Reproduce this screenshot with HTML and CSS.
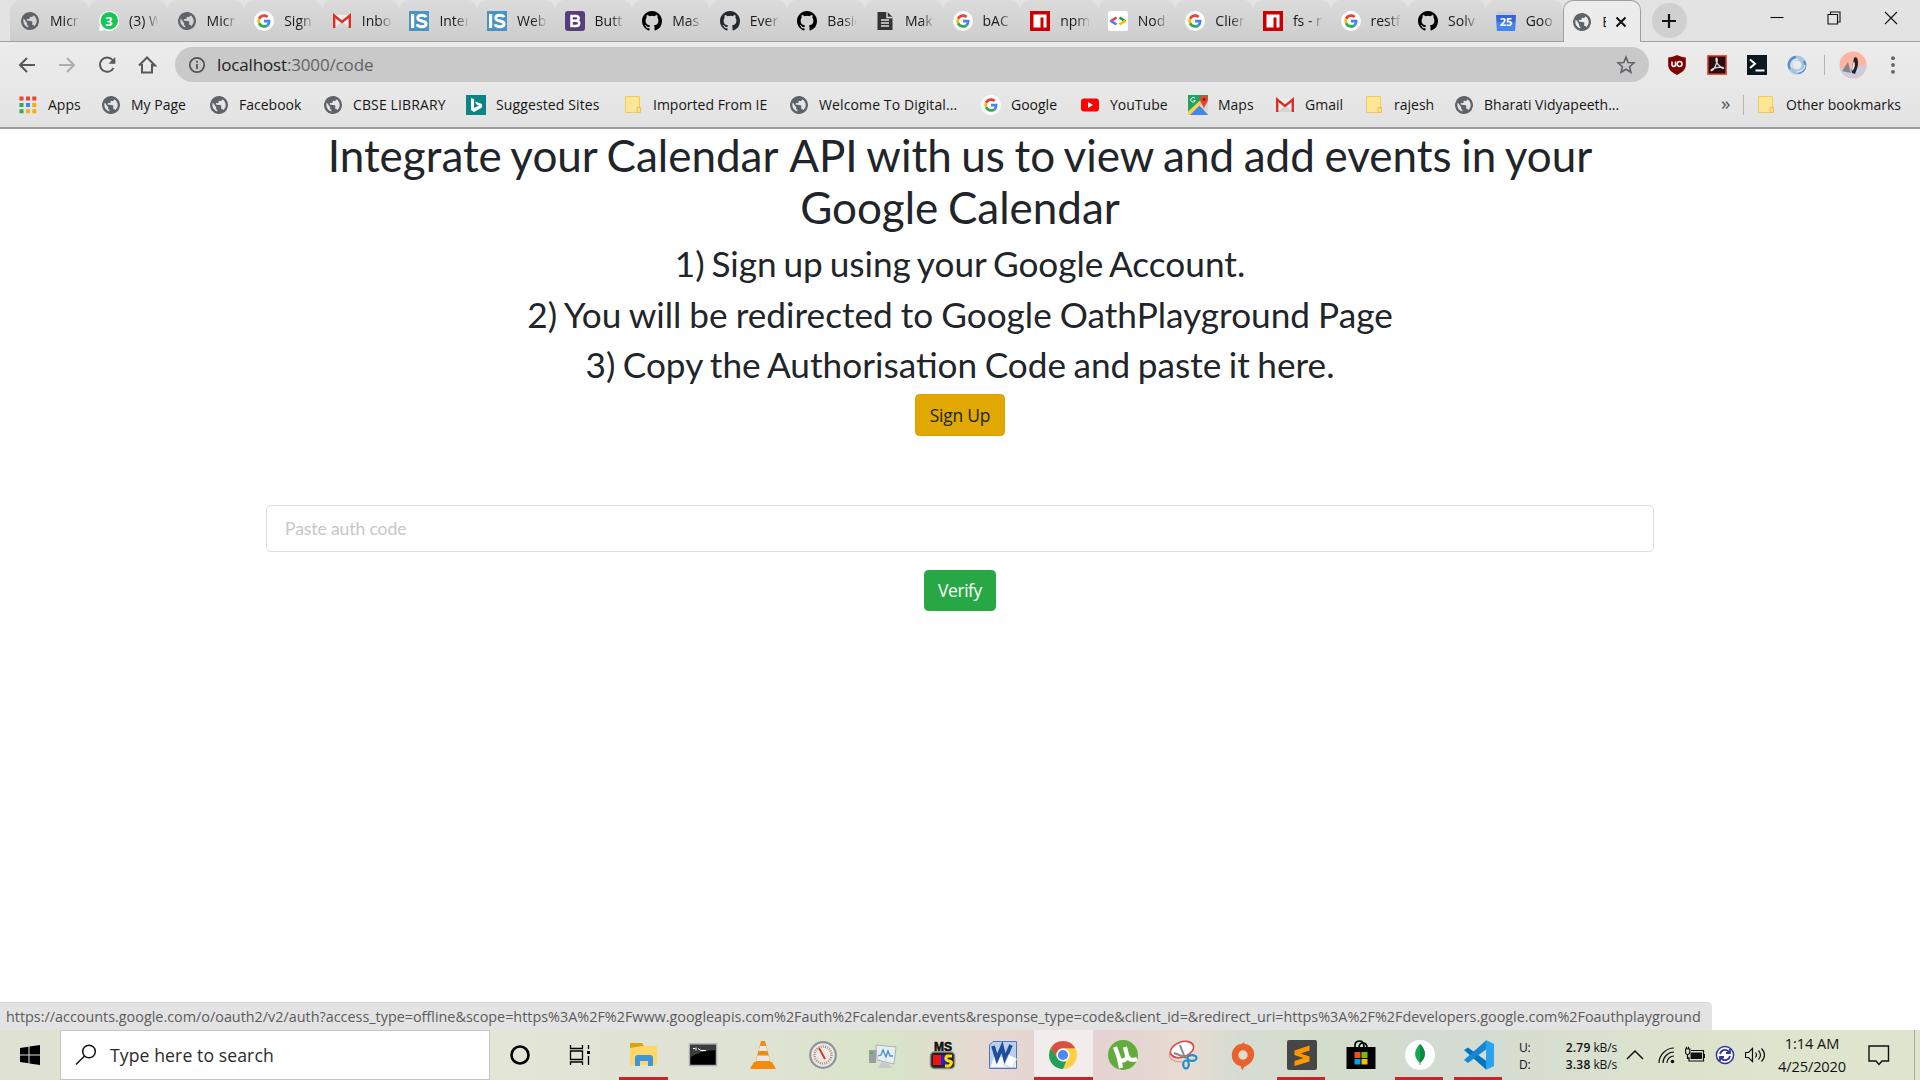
FILE: index.html
```html
<!DOCTYPE html>
<html lang="en">
<head>
<meta charset="utf-8">
<title>Calendar API</title>
<link rel="stylesheet" href="styles.css">
</head>
<body>
<svg class="defs" aria-hidden="true">
  <symbol id="globe" viewBox="0 0 24 24"><path fill="#5f6368" d="M12 1.2a10.8 10.8 0 1 0 0 21.6 10.8 10.8 0 0 0 0-21.6zm-1 18.73c-3.95-.49-7-3.85-7-7.93 0-.62.08-1.21.21-1.79L9 15v1c0 1.1.9 2 2 2v1.93zm6.9-2.54c-.26-.81-1-1.39-1.9-1.39h-1v-3c0-.55-.45-1-1-1H8v-2h2c.55 0 1-.45 1-1V7h2c1.1 0 2-.9 2-2v-.41c2.93 1.19 5 4.06 5 7.41 0 2.08-.8 3.97-2.1 5.39z" transform="rotate(8 12 12)"/></symbol>
  <symbol id="google" viewBox="0 0 20 20"><circle cx="10" cy="10" r="10" fill="#fff"/><g transform="translate(3.2 3.2) scale(.283)"><path fill="#EA4335" d="M24 9.5c3.54 0 6.71 1.22 9.21 3.6l6.85-6.85C35.9 2.38 30.47 0 24 0 14.62 0 6.51 5.38 2.56 13.22l7.98 6.19C12.43 13.72 17.74 9.5 24 9.5z"/><path fill="#4285F4" d="M46.98 24.55c0-1.57-.15-3.09-.38-4.55H24v9.02h12.94c-.58 2.96-2.26 5.48-4.78 7.18l7.73 6c4.51-4.18 7.09-10.36 7.09-17.65z"/><path fill="#FBBC05" d="M10.53 28.59a14.5 14.5 0 0 1 0-9.18l-7.98-6.19a24 24 0 0 0 0 21.56l7.98-6.19z"/><path fill="#34A853" d="M24 48c6.48 0 11.93-2.13 15.89-5.81l-7.73-6c-2.15 1.45-4.92 2.3-8.16 2.3-6.26 0-11.57-4.22-13.47-9.91l-7.98 6.19C6.51 42.62 14.62 48 24 48z"/></g></symbol>
  <symbol id="gmail" viewBox="0 0 20 20"><path fill="#eee" d="M2 4h16v13H2z"/><path fill="#d5d5d5" d="m2 17 8-7 8 7z"/><path fill="none" stroke="#d93025" stroke-width="2.4" d="M2.2 17V4.6L10 11l7.8-6.4V17"/></symbol>
  <symbol id="is" viewBox="0 0 20 20"><path fill="#4795c4" d="M0 0h20v20H0z"/><path fill="#fff" d="M2 3h3.2v14H2z"/><path fill="none" stroke="#fff" stroke-width="2.9" d="M17 6.2C16.500 4.800 15 4.200 12.900 4.200c-2.500 0-4.200 1-4.200 2.800 0 4.200 8.400 1.900 8.400 5.800 0 2-1.600 3-4.200 3-2.400 0-4.300-.7-4.700-2.600"/></symbol>
  <symbol id="github" viewBox="0 0 16 16"><path fill-rule="evenodd" d="M8 0C3.580 0 0 3.580 0 8c0 3.540 2.290 6.530 5.470 7.590.4.070.55-.17.55-.38 0-.19-.01-.82-.01-1.490-2.010.37-2.530-.49-2.690-.94-.09-.23-.48-.94-.82-1.130-.28-.15-.68-.52-.01-.53.63-.01 1.080.58 1.230.82.72 1.210 1.870.87 2.330.66.070-.52.28-.87.51-1.070-1.780-.2-3.640-.89-3.640-3.950 0-.87.31-1.590.82-2.150-.08-.2-.36-1.020.08-2.120 0 0 .67-.21 2.200.82a7.600 7.600 0 0 1 4 0c1.530-1.040 2.200-.82 2.200-.82.44 1.100.16 1.920.08 2.120.51.56.82 1.270.82 2.150 0 3.070-1.870 3.750-3.650 3.950.29.25.54.73.54 1.480 0 1.070-.01 1.930-.01 2.200 0 .21.15.46.55.38A8.010 8.010 0 0 0 16 8c0-4.420-3.580-8-8-8z"/></symbol>
  <symbol id="npm" viewBox="0 0 20 20"><path fill="#c00" d="M0 0h20v20H0z"/><path fill="#fff" d="M3.500 3.500h13v13h-3V6.500h-3v10h-7z"/></symbol>
  <symbol id="folder" viewBox="0 0 20 20"><path fill="#ffe596" stroke="#eccb5f" d="M2.500 1.500h14v16h-14z"/><path fill="#ffe07a" stroke="#eac24a" d="M14 12.500h3.500v5H14z"/></symbol>
</svg>

<header class="browser">
  <div class="tabstrip">
    <div class="tab first"><svg class="ico"><use href="#globe"/></svg><span>Micr</span></div>
    <div class="tab"><svg class="ico" viewBox="0 0 20 20"><path fill="#fff" d="M0 20 1 14A10 10 0 1 1 6 19z"/><circle cx="10.300" cy="9.700" r="8.700" fill="#14c656"/><text x="10" y="14.500" class="badge-num">3</text></svg><span>(3) W</span></div>
    <div class="tab"><svg class="ico"><use href="#globe"/></svg><span>Micr</span></div>
    <div class="tab"><svg class="ico"><use href="#google"/></svg><span>Sign</span></div>
    <div class="tab"><svg class="ico"><use href="#gmail"/></svg><span>Inbo</span></div>
    <div class="tab"><svg class="ico"><use href="#is"/></svg><span>Inter</span></div>
    <div class="tab"><svg class="ico"><use href="#is"/></svg><span>Web</span></div>
    <div class="tab"><svg class="ico" viewBox="0 0 20 20"><rect width="20" height="20" rx="3" fill="#563d7c"/><path fill="none" stroke="#fff" stroke-width="2.500" d="M6.500 5h4.500c3.500 0 3.500 4.700 0 4.700H6.500 11c4.300 0 4.300 5.300 0 5.300H6.500V5z"/></svg><span>Butt</span></div>
    <div class="tab"><svg class="ico"><use href="#github"/></svg><span>Mas</span></div>
    <div class="tab"><svg class="ico slate"><use href="#github"/></svg><span>Ever</span></div>
    <div class="tab"><svg class="ico"><use href="#github"/></svg><span>Basic</span></div>
    <div class="tab"><svg class="ico" viewBox="0 0 20 20"><path fill="#333" d="M2.500 1h10L17.500 6v13h-15z"/><path fill="none" stroke="#e0e0e0" stroke-width="1.400" d="M12 1v5.500h5.500M6 9h8M6 12h8M6 15h8"/></svg><span>Mak</span></div>
    <div class="tab"><svg class="ico"><use href="#google"/></svg><span>bAC</span></div>
    <div class="tab"><svg class="ico"><use href="#npm"/></svg><span>npm</span></div>
    <div class="tab"><svg class="ico" viewBox="0 0 20 20"><rect width="20" height="20" rx="2.500" fill="#fff"/><g fill="none" stroke-width="2.600"><path stroke="#ea4335" d="m8.500 6.500-6 3.800"/><path stroke="#4285f4" d="m2.500 9.700 6 3.800"/><path stroke="#0f9d58" d="m11.500 6.500 6 3.800"/><path stroke="#fbbc05" d="m17.500 9.700-6 3.800"/></g></svg><span>Nod</span></div>
    <div class="tab"><svg class="ico"><use href="#google"/></svg><span>Clien</span></div>
    <div class="tab"><svg class="ico"><use href="#npm"/></svg><span>fs - n</span></div>
    <div class="tab"><svg class="ico"><use href="#google"/></svg><span>restf</span></div>
    <div class="tab"><svg class="ico"><use href="#github"/></svg><span>Solv</span></div>
    <div class="tab last"><svg class="ico" viewBox="0 0 20 20"><path fill="#c9ccd2" d="M1 1h18v5H1z"/><path fill="#3367d6" d="M0 4h20l-1 16H1z"/><path fill="#4285f4" d="M.8 11h18.400l-.6 9H1.400z"/><text x="10" y="15" class="cal-num">25</text></svg><span>Goo</span></div>
    <div class="tab active"><svg class="ico"><use href="#globe"/></svg><span>E</span><svg class="x" viewBox="0 0 12 12"><path d="m1.500 1.500 9 9m0-9-9 9"/></svg></div>
    <div class="newtab"><svg viewBox="0 0 16 16"><path d="M8 1v14M1 8h14"/></svg></div>
    <div class="winbtns">
      <svg viewBox="0 0 14 14"><path d="M.5 6.500h13"/></svg>
      <svg viewBox="0 0 14 14"><path d="M1 3.500h9.500V13H1zM3.500 3.500V1h9.500v10h-2.500"/></svg>
      <svg viewBox="0 0 14 14"><path d="m1 1 12 12m0-12L1 13"/></svg>
    </div>
  </div>

  <div class="toolbar">
    <div class="nav">
      <svg viewBox="0 0 20 20"><path d="M18 10H3m7-7-7 7 7 7"/></svg>
      <svg class="off" viewBox="0 0 20 20"><path d="M2 10h15m-7-7 7 7-7 7"/></svg>
      <svg viewBox="0 0 20 20"><path d="M16.500 13a7.200 7.200 0 1 1-1-8.200l1 1.200"/><path class="fill" d="M18.300 2v6.800h-6.800z"/></svg>
      <svg viewBox="0 0 20 20"><path d="M5 9v8.500h10V9M2 10.500l8-8 8 8h-3"/></svg>
    </div>
    <div class="omnibox">
      <svg class="info" viewBox="0 0 18 18"><circle cx="9" cy="9" r="7.200"/><path d="M9 8v5M9 4.800v1.900"/></svg>
      <p class="url">localhost<span>:3000/code</span></p>
      <svg class="star" viewBox="0 0 20 20"><path d="m10 2.200 2.200 5.300 5.700.5-4.300 3.700 1.300 5.600-4.900-3-4.900 3 1.300-5.600L2.100 8l5.700-.5z"/></svg>
    </div>
    <div class="extensions">
      <svg viewBox="0 0 20 20"><path fill="#800000" d="M10 0c3 1.800 6 2.300 8.800 2.500v7.500c0 5-4 7.500-8.800 10-4.800-2.500-8.800-5-8.800-10V2.500C4 2.300 7 1.800 10 0z"/><path fill="none" stroke="#fff" stroke-width="1.500" d="M5 6.500v3c0 2.500 3.500 2.500 3.500 0v-3m0 0v5"/><circle cx="12.600" cy="9" r="2.400" fill="none" stroke="#fff" stroke-width="1.500"/></svg>
      <svg viewBox="0 0 20 20"><path fill="#2b0f10" stroke="#f0503c" stroke-width="1.500" d="M.8.8h18.400v18.400H.8z"/><path fill="none" stroke="#ddd" stroke-width="1.300" d="M4 15.500C3.500 13 16 11 16.500 13S9 9 9 5s2-1 1 2-3 9-6 8.500z"/></svg>
      <svg viewBox="0 0 20 20"><path fill="#0b1720" d="M0 0h20v20H0z"/><path fill="none" stroke="#fff" stroke-width="2" d="m3 4.500 5 4.300-5 4.300M8.500 15.500h9"/></svg>
      <svg viewBox="0 0 20 20"><circle cx="10" cy="10" r="7" fill="none" stroke="#a9c4e2" stroke-width="5"/><path fill="none" stroke="#5f8fc2" stroke-width="2.400" d="M3 14a8 8 0 0 1 6-12M17 6a8 8 0 0 1-6 12"/><path fill="none" stroke="#dbe8f5" stroke-width="1.500" d="M5.500 13a5.500 5.500 0 0 1 6-8.500M18 10a8 8 0 0 1-8 7"/></svg>
      <i class="vsep"></i>
      <svg class="avatar" viewBox="0 0 28 28"><circle cx="14" cy="14" r="13.500" fill="#ffb3a1"/><path fill="#c9cde0" d="M.7 17c9-2 17 1 26.500-4a13.500 13.500 0 0 1-26.500 4z"/><path fill="#8f8585" d="m3 20 6-9 3 11z"/><path fill="#222" d="M15 7c1-1.500 3-1 3.500 1 1 4 .5 8-1 11l-1.500 4-3-1c-1-4 1-10 2-15z"/><path fill="#eee" d="M15 10c1.500 3 1 7-1.500 10-1-3 0-7 1.500-10z"/></svg>
      <svg class="dots" viewBox="0 0 4 18"><circle cx="2" cy="2.200" r="1.900"/><circle cx="2" cy="9" r="1.900"/><circle cx="2" cy="15.800" r="1.900"/></svg>
    </div>
  </div>

  <div class="bookmarks">
    <div class="bm"><svg class="ico" viewBox="0 0 20 20"><path fill="#ea4335" d="M1.500 1.500h4v4h-4zM8 1.500h4v4H8zM14.300 1.500h4v4h-4z"/><path fill="#34a853" d="M1.500 8h4v4h-4zM1.500 14.300h4v4h-4z"/><path fill="#4285f4" d="M8 8h4v4H8z"/><path fill="#fbab05" d="M14.300 8h4v4h-4zM8 14.300h4v4H8zM14.300 14.300h4v4h-4z"/></svg><span>Apps</span></div>
    <div class="bm"><svg class="ico"><use href="#globe"/></svg><span>My Page</span></div>
    <div class="bm"><svg class="ico"><use href="#globe"/></svg><span>Facebook</span></div>
    <div class="bm wide"><svg class="ico"><use href="#globe"/></svg><span>CBSE LIBRARY</span></div>
    <div class="bm wide"><svg class="ico" viewBox="0 0 20 20"><path fill="#0c8484" d="M0 0h20v20H0z"/><path fill="#fff" d="m5 3 3 1v9l5-2.500-2.500-1L9 6.500l7 2.500v3.500L8 17l-3-2z"/></svg><span>Suggested Sites</span></div>
    <div class="bm"><svg class="ico"><use href="#folder"/></svg><span>Imported From IE</span></div>
    <div class="bm wide"><svg class="ico"><use href="#globe"/></svg><span>Welcome To Digital...</span></div>
    <div class="bm"><svg class="ico"><use href="#google"/></svg><span>Google</span></div>
    <div class="bm"><svg class="ico" viewBox="0 0 20 20"><rect x="1" y="3.500" width="18" height="13" rx="3" fill="red"/><path fill="#fff" d="m8 7 5 3-5 3z"/></svg><span>YouTube</span></div>
    <div class="bm"><svg class="ico" viewBox="0 0 20 20"><path fill="#1fa463" d="M0 0h20v20H0z"/><path fill="#d8d8d8" d="m11 10 9-6v16z"/><path fill="#4285f4" d="m2 20 9-9 8 9z"/><path fill="#ffd04b" d="M0 16.500 12.500 5l1.500 3L2 20H0z"/><path fill="#ea4335" d="M16 14c-1-5-4-6-4-9.500a4 4 0 0 1 8 0C20 8 17 9 16 14z"/><circle cx="16" cy="4.500" r="1.600" fill="#7c1f16"/><path fill="none" stroke="#fff" d="M7 3.500a2.300 2.300 0 1 0 .3 2H5.500"/></svg><span>Maps</span></div>
    <div class="bm"><svg class="ico"><use href="#gmail"/></svg><span>Gmail</span></div>
    <div class="bm"><svg class="ico"><use href="#folder"/></svg><span>rajesh</span></div>
    <div class="bm"><svg class="ico"><use href="#globe"/></svg><span>Bharati Vidyapeeth...</span></div>
    <div class="more">»</div>
    <i class="vsep"></i>
    <div class="bm other"><svg class="ico"><use href="#folder"/></svg><span>Other bookmarks</span></div>
  </div>
</header>

<main class="page">
  <h1>Integrate your Calendar <span class="api">API</span> with us to view and add events in your Google Calendar</h1>
  <h2 class="lead">1) Sign up using your Google Account.</h2>
  <h2 class="loose">2) You will be redirected to Google OathPlayground Page</h2>
  <h2>3) Copy the Authorisation Code and paste it here.</h2>
  <button class="btn signup">Sign Up</button>
  <input class="code" type="text" placeholder="Paste auth code">
  <button class="btn verify">Verify</button>
  <div class="status">https://accounts.google.com/o/oauth2/v2/auth?access_type=offline&amp;scope=https%3A%2F%2Fwww.googleapis.com%2Fauth%2Fcalendar.events&amp;response_type=code&amp;client_id=&amp;redirect_uri=https%3A%2F%2Fdevelopers.google.com%2Foauthplayground</div>
</main>

<footer class="taskbar">
  <div class="start"><svg viewBox="0 0 20 20"><path d="M0 3 8.500 1.800v7.700H0zM9.500 1.600 20 0v9.500H9.500zM0 10.500h8.500v7.700L0 17zM9.500 10.500H20V20L9.500 18.400z"/></svg></div>
  <div class="search"><svg viewBox="0 0 22 22"><circle cx="14" cy="7.500" r="6.300"/><path d="M9.500 12 1 20.500"/></svg><span>Type here to search</span></div>
  <div class="apps">
    <div class="app"><svg viewBox="0 0 30 30"><circle cx="15" cy="15" r="8.500" fill="none" stroke="#000" stroke-width="2.600"/></svg></div>
    <div class="app view"><svg viewBox="0 0 30 30"><path fill="none" stroke="#000" stroke-width="1.300" d="M5.500 5v3.500h12V5M5.500 11h12v8.500h-12zM5.500 25v-3h12v3M23.500 5v4M23.500 16v9"/><path d="M22 11h3v3h-3z"/></svg></div>
    <div class="app run"><svg viewBox="0 0 30 30"><path fill="#e0a00c" d="M2 3h12l2 3v4H2z"/><path fill="#ffd766" d="M2 8l12-2h15v19H2z"/><path fill="#3b97dc" d="M7 26V18q0-3 3-3h12q3 0 3 3v8h-5v-5h-8v5z"/></svg></div>
    <div class="app"><svg viewBox="0 0 30 30"><path fill="#000" stroke="#a8afb5" stroke-width="1.500" d="M1.500 4h27v21.500h-27z"/><path fill="#555" d="M2.500 5h25v5q-15 1-25 7z" opacity=".7"/><path fill="none" stroke="#fff" d="M5 8.500h2m1-1v3m2-2 3 2h5"/></svg></div>
    <div class="app"><svg viewBox="0 0 30 30"><path fill="#f48b0c" d="M6 22h18l4 7H2z"/><path fill="#f48b0c" d="M13 1h4l6 23H7z"/><path fill="#e9e9e9" d="m12 6-1.300 5h8.600L18 6zM9.500 15.500 8 21h14l-1.500-5.500z"/></svg></div>
    <div class="app"><svg viewBox="0 0 30 30"><circle cx="15" cy="15" r="12.800" fill="#ece8e4" stroke="#8d969b" stroke-width="2.200"/><circle cx="15" cy="15" r="8.500" fill="none" stroke="#a98a7c" stroke-dasharray="1 1.200" stroke-width="2.400"/><path stroke="#d33425" stroke-width="1.800" d="m11 8 6 11"/></svg></div>
    <div class="app"><svg viewBox="0 0 30 30"><path fill="#9a9f9f" d="M1 10h7v13H1z"/><path fill="#4fb34f" d="M2 12h3v2H2z"/><path fill="#e9eef2" stroke="#abb3b8" d="m8 5 20 2-2 17-17-4z"/><path fill="none" stroke="#3d92c8" stroke-width="1.300" d="m10 16 3-1 2-5 3 7 2-6 2 5h3"/><path fill="#c4c9cb" d="m14 22 7 2 3 4H10z"/></svg></div>
    <div class="app"><svg viewBox="0 0 30 30"><text x="15" y="10.500" class="ms">MS</text><rect x="2.500" y="12" width="24" height="16.500" rx="4" fill="#222" stroke="#888" stroke-width="1.500"/><path fill="#e11" d="M5 15h8v10H5z"/><path fill="#22c" d="M13 15h7v10h-7z"/><path fill="none" stroke="#fd0" stroke-width="3" d="M24 16h-5q-3 4 2 5t0 5h-4"/></svg></div>
    <div class="app"><svg viewBox="0 0 30 30"><path fill="#bcd0ee" stroke="#5577ad" d="M5 1.500h23.500v27h-27V5z"/><path fill="#f4f7fc" d="M6 17h22v10H2.500z"/><path fill="none" stroke="#1d4f9e" stroke-width="3.800" d="m5 6 4 13 5-12 3 12 6-14"/><path fill="#fff" stroke="#9bb0cf" stroke-width=".6" d="m21 14 8 5-5 9-8-3z"/></svg></div>
    <div class="app run current"><svg viewBox="0 0 30 30"><circle cx="15" cy="15" r="14" fill="#fdd046"/><path fill="#1fa15d" d="M15 29A14 14 0 0 1 2.900 8L9.400 18.200 15 21.500l3 0z"/><path fill="#d94f43" d="M2.900 8A14 14 0 0 1 27.200 8.200H15a6.600 6.600 0 0 0-5.700 10z"/><circle cx="15" cy="15" r="6.500" fill="#fff"/><circle cx="15" cy="15" r="5.100" fill="#4a8af4"/></svg></div>
    <div class="app"><svg viewBox="0 0 30 30"><circle cx="15" cy="15" r="15" fill="#62ac3c"/><path fill="none" stroke="#fff" stroke-width="4.200" d="m7 7 4 11c2 5 9 2 8-3L17 7m2 8c2 5 5 6 10 4M11 18l2 10"/></svg></div>
    <div class="app"><svg viewBox="0 0 30 30"><ellipse cx="14" cy="9.500" rx="12" ry="7.500" transform="rotate(-20 14 9.500)" fill="#fff" stroke="#e04545" stroke-width="1.600"/><path fill="none" stroke="#e58b8b" d="M2 11q-4 11 12 11"/><path stroke="#888" stroke-width="2" d="m12 5 5 13M6 13l13 5"/><g fill="none" stroke="#278acb" stroke-width="2.200"><ellipse cx="24" cy="18" rx="4.500" ry="2.800"/><ellipse cx="18" cy="24.500" rx="2.800" ry="4"/></g></svg></div>
    <div class="app"><svg viewBox="0 0 30 30"><path fill="#e9622c" d="M17 0q-2 3 0 4c7 1 10 7 9 12-1 6-5 8-8 10q-3 1-3 4-3-2-2-4C6 25 3 19 4 13c1-5 5-9 9-9q3-1 4-4z"/><circle cx="15" cy="15" r="4.700" fill="#dcdccf"/></svg></div>
    <div class="app run slim"><svg viewBox="0 0 30 30"><rect width="30" height="30" rx="2" fill="#464646"/><path fill="#ff9800" d="m7.500 10.500 15-5v5l-9 3 9 3v5l-15 4.500v-5l9-3-9-3z"/></svg></div>
    <div class="app"><svg viewBox="0 0 30 30"><path fill="none" stroke="#000" stroke-width="1.700" d="M9 8V5q0-4 5-4 4 0 4 7M13 8q0-5 4-5t4 5"/><path d="M.5 7h29v22H.5z"/><path fill="#f25022" d="M8.500 12h6v6h-6z"/><path fill="#7fba00" d="M15.500 12h6v6h-6z"/><path fill="#00a4ef" d="M8.500 19h6v5.500h-6z"/><path fill="#ffb900" d="M15.500 19h6v5.500h-6z"/></svg></div>
    <div class="app run slim"><svg viewBox="0 0 30 30"><circle cx="15" cy="15" r="15" fill="#fff"/><path fill="#13aa52" d="M15 4c7 7 6 14 0 19-6-5-7-12 0-19z"/><path fill="#0b8a43" d="M15 4c7 7 6 14 0 19z"/><path stroke="#6b8f71" d="M15 21v4"/></svg></div>
    <div class="app run slim"><svg viewBox="0 0 30 30"><path fill="#0076c0" d="M0 10 4 7.500l19 14-1 8z"/><path fill="#1687d3" d="M0 20 4 23 24 8 22 .5z"/><path fill="#2aa3f0" d="m22 0 8 4v22l-8 4z"/></svg></div>
  </div>
  <div class="net"><span>U:</span><span><b>2.79</b> kB/s</span><span>D:</span><span><b>3.38</b> kB/s</span></div>
  <div class="tray">
    <svg viewBox="0 0 20 20"><path d="m2 14 8-8 8 8"/></svg>
    <svg viewBox="0 0 20 20"><path class="thin" d="M3 18C3 10 10 3 18 3M7 18c0-6 5-11 11-11M11 18c0-4 3-7 7-7"/><circle cx="16.500" cy="16.500" r="1.800"/></svg>
    <svg viewBox="0 0 20 20"><path class="solid" d="M5.500 7.500h11.500v6.500H5.500z"/><path class="thin" d="M6 5.500h12.500v10.500H4V12M19.500 9v4M.5 4v3q0 2.500 2 2.500T4.800 7V4zM1.500 1.800V4m2-2.200V4M2.500 10v3.500H4"/></svg>
    <svg viewBox="0 0 20 20"><circle cx="10" cy="10" r="8.600" class="sync"/><path class="arrows" d="M5 9a5 5 0 0 1 8.500-2.500L15 8m0-4v4h-4M15 11a5 5 0 0 1-8.500 2.500L5 12m0 4v-4h4"/></svg>
    <svg viewBox="0 0 20 20"><path class="thin" d="M.5 7.500h3l4-4v13l-4-4h-3zM10.500 7.500q2 2.500 0 5M13.500 5.500q4 4.500 0 9M16.500 3.500q6 6.500 0 13"/></svg>
  </div>
  <div class="clock"><span>1:14 AM</span><span>4/25/2020</span></div>
  <div class="notif"><svg viewBox="0 0 22 22"><path d="M1 2h19.500v15H14l-3 3.500L8 17H1z"/></svg></div>
</footer>
</body>
</html>
```

FILE: styles.css
```css
* { box-sizing: border-box; }

body {
  margin: 0;
  width: 1920px;
  height: 1080px;
  display: flex;
  flex-direction: column;
  overflow: hidden;
  background: #fff;
  font-family: "Open Sans", "Noto Sans", sans-serif;
  font-size: 14px;
  color: #111;
}

svg { flex: none; display: block; }
.defs { position: absolute; width: 0; height: 0; }
.ico { width: 20px; height: 20px; }
.slate { fill: #24292e; }
.vsep { width: 1px; height: 20px; background: #b4b4b4; }

/* Browser frame */
.browser {
  height: 129px;
  flex: none;
  border-bottom: 2px solid #9c9c9c;
  background: linear-gradient(#e3e3e3 0, #e3e3e3 41px, #ececec 42px, #e3e3e3 127px);
}

.tabstrip {
  height: 42px;
  padding-left: 10px;
  display: flex;
  border-bottom: 1px solid #a0a0a0;
}

.tab {
  position: relative;
  width: 77.6px;
  height: 41px;
  flex: none;
  display: flex;
  align-items: center;
  gap: 10px;
  padding-left: 10px;
  border-radius: 10px 10px 0 0;
  background: linear-gradient(#dbdbdb, #cdcdcd);
  color: #1a1a1a;
}
.tab.first { width: 79px; }
.tab:not(.last):not(.active)::after {
  content: "";
  position: absolute;
  right: -1px;
  top: 9px;
  width: 1px;
  height: 25px;
  background: #7d7d7d;
}
.tab span {
  width: 29px;
  overflow: hidden;
  white-space: nowrap;
  mask-image: linear-gradient(90deg, #000 55%, rgba(0, 0, 0, .1));
}
.tab.active {
  height: 42px;
  width: 77.500px;
  padding-left: 8px;
  border: 1px solid #a0a0a0;
  border-bottom: 0;
  background: #ececec;
  z-index: 1;
}
.tab.active span { width: 4px; margin-right: -1px; mask-image: none; }
.x { width: 12px; height: 12px; stroke: #111; stroke-width: 2; }
.badge-num { font: bold 13px "Open Sans", sans-serif; fill: #fff; text-anchor: middle; }
.cal-num { font: bold 11px "Open Sans", sans-serif; fill: #fff; text-anchor: middle; }

.newtab {
  width: 35px;
  height: 35px;
  margin: 3px 0 0 11px;
  border-radius: 50%;
  background: #d0d0d0;
  display: grid;
  place-items: center;
}
.newtab svg { width: 16px; height: 16px; stroke: #111; stroke-width: 2.200; }

.winbtns {
  margin-left: auto;
  padding: 11px 22px 0 0;
  display: flex;
  gap: 43px;
}
.winbtns svg { width: 14px; height: 14px; fill: none; stroke: #111; stroke-width: 1.100; }

.toolbar {
  height: 45px;
  padding: 0 0 0 17px;
  display: flex;
  align-items: center;
}
.nav { display: flex; gap: 20px; width: 158px; }
.nav svg { width: 20px; height: 20px; fill: none; stroke: #55585c; stroke-width: 2; }
.nav .off { stroke: #adadad; }
.nav .fill { fill: #55585c; stroke: none; }

.omnibox {
  width: 1474px;
  height: 35px;
  border-radius: 18px;
  padding: 0 13px;
  background: #c9c9c9;
  display: flex;
  align-items: center;
}
.info { width: 18px; height: 18px; fill: none; stroke: #4f5256; stroke-width: 1.700; }
.url { margin: 0 auto 0 11px; font-size: 17px; color: #222; letter-spacing: -.15px; }
.url span { color: #606366; }
.star { width: 20px; height: 20px; fill: none; stroke: #5f6368; stroke-width: 1.600; }

.extensions { flex: 1; display: flex; align-items: center; padding-left: 18px; gap: 20px; }
.extensions svg { width: 20px; height: 20px; }
.extensions .vsep { margin-left: -3px; }
.extensions .avatar { width: 28px; height: 28px; margin-left: -6px; }
.extensions .dots { width: 4px; height: 18px; fill: #5f6368; margin-left: 4px; }

.bookmarks {
  height: 36px;
  padding-left: 18px;
  display: grid;
  grid-template-columns: 83px 108px 114px 143px 157px 166px 192px 99px 108px 87px 89px 90px 267px 22px 13px 1fr;
  align-items: center;
}
.bm { display: flex; align-items: center; gap: 10px; white-space: nowrap; color: #161616; }
.bm span { padding-bottom: 2px; }
.bm.wide { letter-spacing: .12px; }
.more { font-size: 19px; color: #555; line-height: 20px; padding-bottom: 4px; }

/* Page */
.page {
  position: relative;
  flex: 1;
  display: flex;
  flex-direction: column;
  align-items: center;
  font-family: Lato, sans-serif;
  color: #212529;
  text-align: center;
}
h1, h2 { margin: 0; font-weight: 400; word-spacing: -1.550px; }
h1 { width: 1355px; font-size: 44px; line-height: 52px; margin-bottom: 9px; word-spacing: -1.700px; }
h1 .api { margin-left: 2px; }
h2 { font-size: 35.200px; line-height: 42px; margin-bottom: 8.600px; }
h2.lead { word-spacing: -2.200px; }
h2.loose { word-spacing: -1px; }

.btn {
  height: 42px;
  padding: 0;
  border: 1px solid;
  border-radius: 4.400px;
  font-family: "Open Sans", sans-serif;
  font-size: 17.400px;
  letter-spacing: -.200px;
}
.signup { width: 90px; background: #e0a800; border-color: #d39e00; color: #212529; }
.verify { width: 72px; height: 41px; background: #28a745; border-color: #28a745; color: #fff; letter-spacing: -.4px; }

.code {
  width: 1388px;
  height: 47px;
  margin: 69px 0 18px;
  padding: 0 18px;
  border: 1px solid #dededf;
  border-radius: 5px;
  font: 17.600px Lato, sans-serif;
  letter-spacing: -.130px;
}
.code::placeholder { color: #c7c7c7; }

.status {
  position: absolute;
  left: 0;
  bottom: 0;
  width: 1712px;
  height: 28px;
  padding-left: 6px;
  border: solid #d5d5d5;
  border-width: 1px 0 0;
  border-radius: 0 5px 0 0;
  background: #e3e3e3;
  color: #5b5b5b;
  font: 14.380px/27px "Open Sans", sans-serif;
  text-align: left;
  white-space: nowrap;
}

/* Taskbar */
.taskbar {
  height: 50px;
  flex: none;
  display: flex;
  background: linear-gradient(90deg, #dfe1d2 0, #e3e5d6 500px, #dfe3d4 760px, #d7e4c6 890px, #e6d8d2 980px, #e5d3d3 1110px, #e6dcd0 1190px, #d6dcd3 1240px, #d4ddcb 1320px, #d3dbd3 1450px, #dbe2cd 1640px, #e0e5cd 1860px, #dce5cf 1920px);
}
.taskbar > div { flex: none; }
.start { width: 60px; display: grid; place-items: center; }
.start svg { width: 20px; height: 20px; }
.search {
  width: 430px;
  padding-left: 14px;
  border: 1px solid #c6c6c6;
  background: #fff;
  display: flex;
  align-items: center;
  gap: 13px;
  font-size: 17.600px;
  letter-spacing: .1px;
  color: #2b2b2b;
}
.search svg { width: 22px; height: 22px; fill: none; stroke: #111; stroke-width: 1.500; }
.search span { padding-bottom: 1px; }

.apps {
  width: 1018px;
  display: grid;
  grid-template-columns: 60px 63px repeat(10, 60px) repeat(5, 59px);
}
.app { position: relative; display: grid; place-items: center; }
.app svg { width: 30px; height: 30px; }
.app.view { padding-right: 4px; }
.app.run::after {
  content: "";
  position: absolute;
  left: 6px;
  bottom: 0;
  width: 49px;
  height: 3px;
  background: #cc2229;
}
.app.slim::after { left: 5px; width: 48px; }
.app.current { background: linear-gradient(#f3ecec, #f3ecec) 1px 0 / 59px 100% no-repeat; }
.app.current::after { left: 1px; width: 59px; }
.ms { font: 900 12px "Liberation Sans", sans-serif; text-anchor: middle; fill: #111; stroke: #111; stroke-width: .6; }

.net {
  width: 110px;
  margin-left: 11px;
  padding: 9px 12px 8px 0;
  display: grid;
  grid-template-columns: 1fr auto;
  line-height: 17px;
  font-size: 12px;
  letter-spacing: -.15px;
}
.net b { font-weight: 600; letter-spacing: .2px; }

.tray { display: flex; align-items: center; gap: 10px; margin-left: -4px; width: 149px; }
.tray svg { width: 20px; height: 20px; fill: none; stroke: #111; stroke-width: 1.500; }
.tray svg:first-child { margin-right: 1px; }
.tray circle { fill: #111; stroke: none; }
.tray .thin { stroke-width: 1.200; }
.tray .solid { fill: #111; stroke: none; }
.tray .sync { fill: #fff; stroke: #34369b; stroke-width: 1.500; }
.tray .arrows { stroke: #34369b; stroke-width: 1.800; }
.tray svg:nth-child(n+3) { position: relative; left: -1px; }

.clock {
  width: 76px;
  display: flex;
  flex-direction: column;
  align-items: center;
  padding-top: 2px;
  line-height: 23px;
  white-space: nowrap;
  font-size: 14.600px;
  letter-spacing: -.1px;
}
.notif { width: 65px; padding-left: 18px; display: grid; align-items: center; border-right: 1px solid #a9ae9d; }
.notif svg { width: 22px; height: 22px; fill: none; stroke: #111; stroke-width: 1.400; }
```
